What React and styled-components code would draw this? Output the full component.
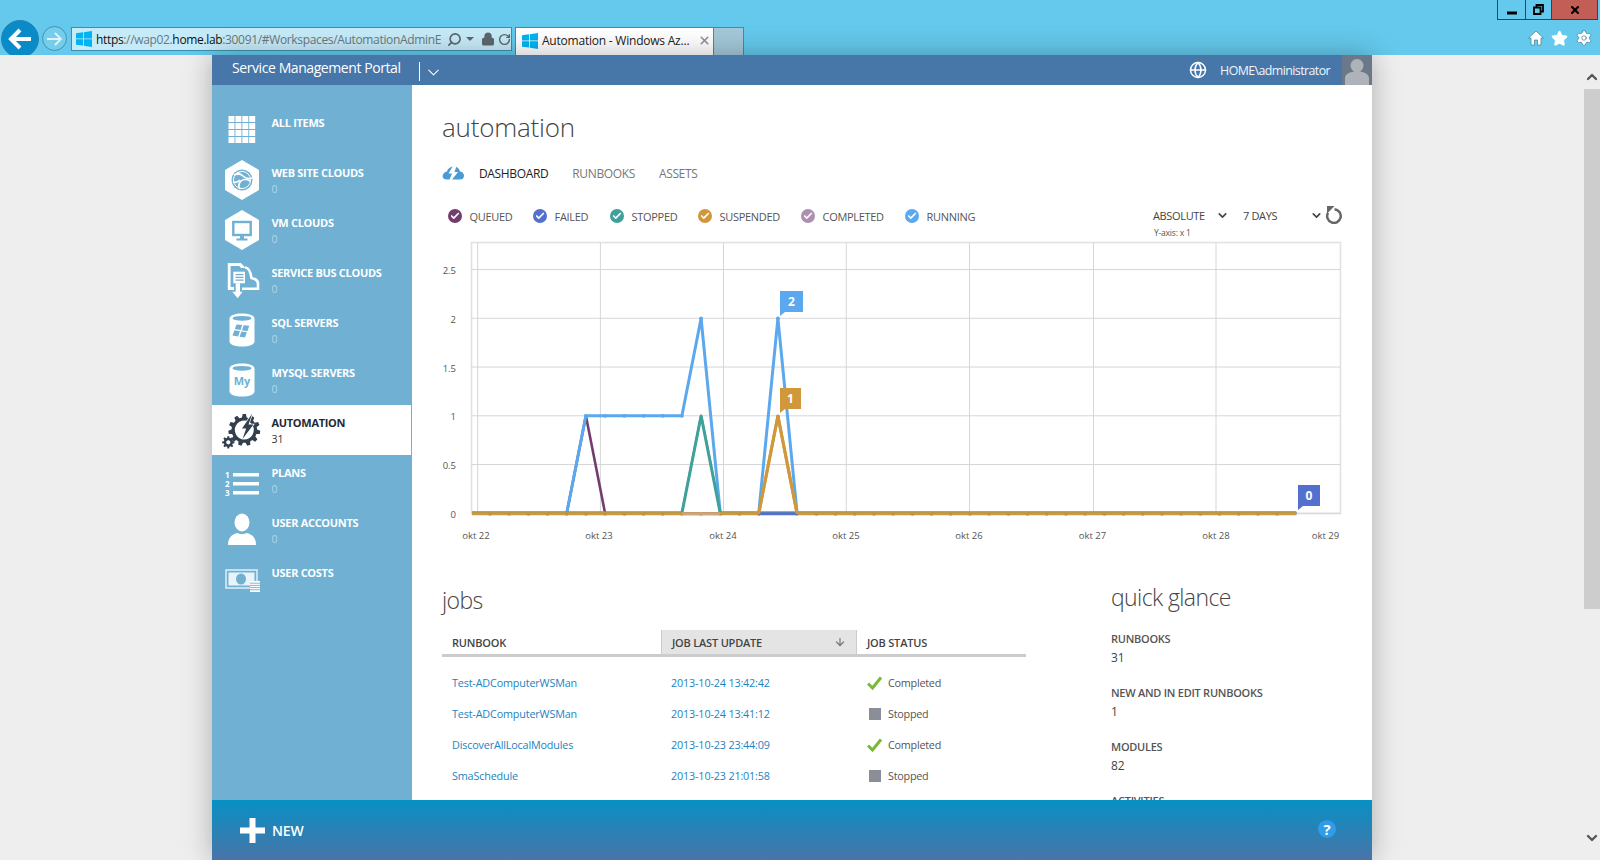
import React from "react";
import styled, { createGlobalStyle } from "styled-components";
import { Globe, Star, Settings, RotateCw, Search, Lock, ArrowDown, X, ChevronDown, ChevronUp, Check } from "lucide-react";

const Global = createGlobalStyle`
  html, body { margin: 0; padding: 0; height: 860px; overflow: hidden; background: #eeeeee; }
  body { font-family: "Open Sans", "Noto Sans", sans-serif; }
  #root { height: 860px; }
  * { box-sizing: border-box; }
`;

const Shell = styled.div`
  width: 1600px; height: 860px; display: flex; flex-direction: column; overflow: hidden;
`;
const Chrome = styled.header`
  height: 55px; background: #64c9ec; display: flex; justify-content: space-between; flex: none; overflow: hidden;
`;
const NavGroup = styled.div`
  display: flex; align-items: flex-start; padding: 20px 0 0 1px;
`;
const BackButton = styled.div`
  width: 38px; height: 38px; border-radius: 50%; background: #0a8bc9; border: 1px solid #2a83ad;
  display: flex; align-items: center; justify-content: center; flex: none;
`;
const ForwardButton = styled.div`
  width: 25px; height: 25px; margin: 6px 4px 0 3px; border-radius: 50%; border: 1px solid #3f94b4; background: #76cdeb;
  display: flex; align-items: center; justify-content: center; flex: none;
`;
const AddressBar = styled.div`
  width: 441px; height: 24px; margin-top: 7px; border: 1px solid #3c8eae; background: #c6ebf8;
  display: flex; align-items: center; padding: 0 0 0 4px; flex: none;
`;
const Url = styled.div`
  width: 346px; flex: none; margin: 2px 0 0 4px; font-size: 12px; letter-spacing: -0.34px; white-space: nowrap; overflow: hidden; color: #6a7880; line-height: 20px;
  b { font-weight: 400; color: #111; }
`;
const AddressTools = styled.div`
  display: flex; align-items: center; margin-left: 5px; color: #5c666c; flex: none;
  gap: 3px;
`;
const TinyCaret = styled.span`
  width: 0; height: 0; border-left: 4px solid transparent; border-right: 4px solid transparent; border-top: 4px solid #5c666c; margin: 0 4px 0 1px;
`;
const TabStrip = styled.div`
  display: flex; margin: 7px 0 0 3px; height: 28px;
`;
const ActiveTab = styled.div`
  width: 199px; background: #fff; border: 1px solid #3c8eae; border-bottom: 0; display: flex; align-items: center; padding: 0 2px 2px 6px;
  font-size: 12px; letter-spacing: -0.22px; color: #222; white-space: nowrap;
  span { flex: 1; margin-left: 4px; }
`;
const NewTab = styled.div`
  width: 30px; background: #a3c8d8; border: 1px solid #3c8eae; border-left: 0; border-bottom: 0;
`;
const RightGroup = styled.div`
  display: flex; flex-direction: column; align-items: flex-end; padding-right: 2px;
`;
const WindowButtons = styled.div`
  display: flex; height: 20px; border: 1px solid #1d4b5e; border-top: 0;
`;
const WinButton = styled.div`
  width: ${p => p.$w}px; display: flex; align-items: center; justify-content: center;
  background: ${p => p.$close ? "#c25e55" : "transparent"};
  & + & { border-left: 1px solid #1d4b5e; }
`;
const BrowserTools = styled.div`
  display: flex; align-items: center; gap: 7px; margin-top: 9px; padding-right: 5px;
`;

const Page = styled.div`
  flex: 1; display: flex; min-height: 0; position: relative;
`;
const Gutter = styled.div`
  width: 212px; flex: none;
`;
const Portal = styled.div`
  width: 1160px; flex: none; display: flex; flex-direction: column; background: #fff;
  box-shadow: 0 0 26px rgba(0,0,0,.28);
`;
const PortalHeader = styled.div`
  height: 30px; flex: none; background: #4776a9; color: #fff; display: flex; align-items: center;
`;
const PortalName = styled.div`
  margin: -5px 0 0 20px; width: 187px; font-size: 14px; letter-spacing: -0.42px; white-space: nowrap;
`;
const HeaderDivider = styled.div`
  width: 1px; height: 19px; background: #fff; margin-top: 2px;
`;
const UserArea = styled.div`
  margin-left: auto; display: flex; align-items: center; height: 100%;
`;
const UserName = styled.div`
  font-size: 12.4px; letter-spacing: -0.58px; margin: 0 12px 0 13px; color: #f2f6fa; white-space: nowrap;
`;
const Avatar = styled.div`
  width: 30px; height: 30px; background: #6b7889; display: flex; align-items: flex-end; justify-content: center; overflow: hidden;
`;
const PortalBody = styled.div`
  flex: 1; display: flex; min-height: 0;
`;
const Sidebar = styled.nav`
  width: 200px; flex: none; background: #6fb0d3; padding-top: 20px;
`;
const Item = styled.div`
  height: 50px; display: flex; background: ${p => p.$active ? "#fff" : "transparent"};
  margin-right: ${p => p.$active ? 1 : 0}px;
`;
const ItemIcon = styled.div`
  width: 60px; flex: none; display: flex; align-items: center; justify-content: center;
`;
const ItemText = styled.div`
  padding-top: 9px; margin-left: -0.5px;
`;
const ItemLabel = styled.div`
  font-size: 11px; font-weight: 700; line-height: 18px; letter-spacing: -0.3px; white-space: nowrap;
  color: ${p => p.$active ? "#222b36" : "#fff"};
`;
const ItemCount = styled.div`
  font-size: 10.5px; line-height: 15px; color: ${p => p.$active ? "#333" : "#b2d6ea"};
`;
const Main = styled.main`
  flex: 1; min-width: 0; padding: 24px 0 0 30px; overflow: hidden;
`;
const Title = styled.h1`
  margin: 0; font-size: 26px; font-weight: 300; line-height: 36px; color: #444; letter-spacing: -0.2px;
`;
const Tabs = styled.div`
  display: flex; align-items: center; height: 20px; margin-top: 18px;
`;
const TabItem = styled.div`
  font-size: 12px; letter-spacing: -0.36px; margin-right: 24px; white-space: nowrap; color: ${p => p.$on ? "#222" : "#777"};
`;
const TabIcon = styled.div`
  width: 37px; flex: none; height: 14px; display: flex;
`;
const LegendRow = styled.div`
  display: flex; justify-content: space-between; height: 32px; margin-top: 23px; padding-left: 6px; width: 908px;
`;
const LegendItems = styled.div`
  display: flex; height: 20px;
`;
const LegendItem = styled.div`
  width: ${p => p.$w}px; display: flex; align-items: center; gap: 7.5px; font-size: 11px; letter-spacing: -0.3px; color: #555; white-space: nowrap;
`;
const LegendDot = styled.span`
  width: 14px; height: 14px; border-radius: 50%; background: ${p => p.$c}; display: flex; align-items: center; justify-content: center; flex: none;
`;
const Controls = styled.div`
  width: 197px; display: flex; flex-direction: column;
`;
const ControlRow = styled.div`
  height: 20px; display: flex; align-items: center; font-size: 11px; letter-spacing: -0.35px; color: #444; white-space: nowrap;
`;
const Select = styled.span`
  width: ${p => p.$w}px; display: flex; align-items: center; justify-content: space-between; margin-right: ${p => p.$m || 0}px;
`;
const AxisNote = styled.div`
  font-size: 8.5px; line-height: 11px; color: #555; padding: 2px 0 0 1px; letter-spacing: -0.2px;
`;
const ChartSvg = styled.svg`
  display: block; font-family: "Open Sans", sans-serif;
`;
const Lower = styled.div`
  display: flex; gap: 85px; width: 908px;
`;
const Jobs = styled.section`
  width: 584px; flex: none; padding-top: 34px;
`;
const Heading = styled.h2`
  margin: 0; font-size: 23px; font-weight: 300; line-height: 32px; color: #444; letter-spacing: -0.6px;
`;
const TableHead = styled.div`
  display: grid; grid-template-columns: 219px 196px 169px; height: 27px; margin-top: 14px; border-bottom: 3px solid #ccc;
`;
const HeadCell = styled.div`
  font-size: 11px; font-weight: 600; color: #444; letter-spacing: -0.2px; display: flex; align-items: center; justify-content: space-between; padding: 0 10px;
  background: ${p => p.$sorted ? "#e4e4e4" : "transparent"};
  border-left: ${p => p.$sorted ? "1px solid #ccc" : "0"};
  border-right: ${p => p.$sorted ? "1px solid #ccc" : "0"};
`;
const TableBody = styled.div`
  padding-top: 10px;
`;
const Row = styled.div`
  display: grid; grid-template-columns: 219px 196px 169px; height: 31px; align-items: center; font-size: 10.8px;
`;
const LinkCell = styled.a`
  padding-left: 10px; color: #1d83bf; white-space: nowrap; letter-spacing: -0.16px;
`;
const StatusCell = styled.div`
  padding-left: 10px; display: flex; align-items: center; gap: 6px; color: #555; letter-spacing: -0.24px;
`;
const StatusIcon = styled.span`
  width: 15px; height: 15px; display: flex; align-items: center; justify-content: center; flex: none;
`;
const StopSquare = styled.span`
  width: 12px; height: 12px; background: #8a8e96; display: block; margin-left: 1px;
`;
const Glance = styled.section`
  flex: 1; padding-top: 31px;
`;
const Stats = styled.div`
  padding-top: 17px;
`;
const Stat = styled.div`
  margin-bottom: 17px;
`;
const StatLabel = styled.div`
  font-size: 11px; font-weight: 600; line-height: 18px; color: #555; letter-spacing: -0.26px; white-space: nowrap;
`;
const StatValue = styled.div`
  font-size: 12px; line-height: 18px; color: #444; margin-top: 1px;
`;
const Footer = styled.footer`
  height: 60px; flex: none; background: linear-gradient(#0890c4, #4874a8); color: #fff; display: flex; align-items: center; padding: 0 36px 0 28px;
`;
const NewLabel = styled.div`
  margin-left: 7px; font-size: 14px; font-weight: 600; letter-spacing: -0.1px;
`;
const Help = styled.div`
  margin-left: auto; margin-top: -3px; width: 18px; height: 18px; border-radius: 50%; background: #2f9de8; color: #fff;
  font-size: 15px; font-weight: 700; display: flex; align-items: center; justify-content: center;
`;
const Scroll = styled.div`
  margin-left: auto; width: 16px; flex: none; display: flex; flex-direction: column; align-items: center; background: #eeeeee;
`;
const ScrollCap = styled.div`
  height: ${p => p.$h}px; display: flex; align-items: center; justify-content: center; flex: none; width: 100%;
  padding: ${p => p.$pad || "0"};
`;
const ScrollThumb = styled.div`
  height: 520px; width: 100%; background: #cdcdcd; flex: none;
`;
const ScrollTrack = styled.div`
  flex: 1;
`;

const WinLogo = ({ size = 16, color = "#00b4f1" }) => (
  <svg width={size} height={size} viewBox="0 0 16 16" style={{ flex: "none" }}>
    <path fill={color} d="M0 2.3 7 1.3V7.5H0ZM7.8 1.2 16 0V7.5H7.8ZM0 8.3H7V14.6L0 13.7ZM7.8 8.3H16V16L7.8 14.8Z" />
  </svg>
);

const gearPath = (cx, cy, ro, ri, teeth) => {
  const pts = [];
  const step = (Math.PI * 2) / teeth;
  for (let i = 0; i < teeth; i++) {
    const a = i * step - Math.PI / 2;
    const w = step * 0.24;
    [[a - w * 1.35, ri], [a - w * 0.75, ro], [a + w * 0.75, ro], [a + w * 1.35, ri]].forEach(([t, r]) => {
      pts.push(`${(cx + r * Math.cos(t)).toFixed(2)} ${(cy + r * Math.sin(t)).toFixed(2)}`);
    });
  }
  return "M" + pts.join("L") + "Z";
};

const BG = "#6fb0d3";
const Hex = () => <polygon fill="#fff" points="22,2 39,12 39,32 22,42 5,32 5,12" />;
const Cylinder = () => (
  <path fill="#fff" d="M9.500 10.500C9.500 7.500 15 5.500 22 5.500S34.500 7.500 34.500 10.500V33.500C34.500 36.500 29 38.500 22 38.500S9.500 36.500 9.500 33.500Z" />
);
const CylTop = () => <ellipse cx="22" cy="10.300" rx="9.500" ry="2.400" fill={BG} />;

const icons = {
  all: (
    <svg width="44" height="44" viewBox="0 0 44 44">
      {[0, 1, 2, 3].flatMap(r => [0, 1, 2, 3].map(c => <rect key={`${r}${c}`} x={8.5 + c * 6.9} y={8 + r * 7} width="6" height="6" fill="#fff" />))}
    </svg>
  ),
  web: (
    <svg width="44" height="44" viewBox="0 0 44 44">
      <Hex />
      <circle cx="22" cy="22" r="10.500" fill={BG} />
      <circle cx="22" cy="22" r="8.600" fill="none" stroke="#fff" strokeWidth="1" />
      <path fill="none" stroke="#fff" strokeWidth="1.700" d="M14 17c4-2 7-1 9 1s6 3 9 2M13 24c3 1 5 0 7-2M20 31c-2-3-1-6 1-8s6-2 9 0" />
      <circle cx="18" cy="15.500" r="1.700" fill="#fff" />
    </svg>
  ),
  vm: (
    <svg width="44" height="44" viewBox="0 0 44 44">
      <Hex />
      <rect x="13.300" y="14" width="17.400" height="13" fill="none" stroke={BG} strokeWidth="2.400" />
      <path fill={BG} d="M20 28h4v2.500h3.500V32.500h-11V30.500H20Z" />
    </svg>
  ),
  bus: (
    <svg width="44" height="44" viewBox="0 0 44 44">
      <path fill="none" stroke="#fff" strokeWidth="2.800" d="M21 6.500H9.200V30.500H14" />
      <path fill="#fff" d="M17 5.500h4.500l4 4.500h-4.500Z" />
      <path fill="#fff" d="M13.300 13.700H25V25.300H13.300Z" />
      <path fill={BG} d="M15.500 16h8v1.200h-8ZM15.500 18.800h8V20h-8ZM15.500 21.600h8v1.200h-8Z" />
      <path fill="#fff" d="M15.700 25.300H20V33.700H22.500L17.700 40.300 12.300 33.700H15.700Z" />
      <path fill="none" stroke="#fff" strokeWidth="2.600" d="M25 9.500c3.500 0 5.500 4 6.500 10.500 4.500 1 6.500 3 6.500 5.500V30.700H22" />
    </svg>
  ),
  sql: (
    <svg width="44" height="44" viewBox="0 0 44 44">
      <Cylinder />
      <CylTop />
      <g fill={BG} transform="rotate(10 22 23) skewX(-10)">
        <path d="M19.500 17.500 25.200 17v5.200H19.500ZM26.700 17l5.500-.4v5.600h-5.500ZM19.500 23.500h5.700V29h-5.700ZM26.700 23.500h5.500V29h-5.500Z" transform="translate(-1 0)" />
      </g>
    </svg>
  ),
  mysql: (
    <svg width="44" height="44" viewBox="0 0 44 44">
      <Cylinder />
      <CylTop />
      <text x="22" y="27" textAnchor="middle" fontFamily="Open Sans, sans-serif" fontWeight="700" fontSize="11" fill={BG}>My</text>
    </svg>
  ),
  automation: (
    <svg width="44" height="44" viewBox="0 0 44 44">
      <path fillRule="evenodd" fill="#333f4d" d={gearPath(24.300, 22, 16, 12.800, 11) + "M24.300 12.500a9.500 9.500 0 1 0 .01 0Z"} />
      <path fill="#333f4d" stroke="#fff" strokeWidth="1.400" paintOrder="stroke" d="M32.300 5.500 22 20.500h4.200L22.500 31 33.500 16.500h-5L32.300 5.500Z" />
      <path fillRule="evenodd" fill="#333f4d" d={gearPath(8.300, 34.300, 6.200, 4.600, 8) + "M8.300 32.200a2.100 2.100 0 1 0 .01 0Z"} />
    </svg>
  ),
  plans: (
    <svg width="44" height="44" viewBox="0 0 44 44" fill="#fff">
      <text fontFamily="Open Sans, sans-serif" fontWeight="700" fontSize="8" x="5" y="20">1</text>
      <text fontFamily="Open Sans, sans-serif" fontWeight="700" fontSize="8" x="5" y="29">2</text>
      <text fontFamily="Open Sans, sans-serif" fontWeight="700" fontSize="8" x="5" y="38">3</text>
      <rect x="13" y="15" width="26" height="3.500" />
      <rect x="13" y="24" width="26" height="3.500" />
      <rect x="13" y="33" width="26" height="3.500" />
    </svg>
  ),
  user: (
    <svg width="44" height="44" viewBox="0 0 44 44" fill="#fff">
      <ellipse cx="22" cy="14.500" rx="7.500" ry="9" />
      <path d="M8 37c0-7 3-10 9-12 3 1.500 7 1.500 10 0 6 2 9 5 9 12Z" />
    </svg>
  ),
  costs: (
    <svg width="44" height="44" viewBox="0 0 44 44">
      <rect x="6" y="12" width="31" height="18" fill="none" stroke="#fff" strokeWidth="1.400" opacity=".85" />
      <rect x="8.500" y="14.500" width="26" height="13" fill="#fff" opacity=".85" />
      <ellipse cx="21" cy="21" rx="5" ry="5.500" fill={BG} />
      <rect x="30" y="23" width="10" height="11" fill="#fff" />
      <path stroke={BG} strokeWidth=".9" d="M30 25.200h10M30 27.400h10M30 29.600h10M30 31.800h10" />
    </svg>
  ),
};

const navItems = [
  ["all", "ALL ITEMS", ""],
  ["web", "WEB SITE CLOUDS", "0"],
  ["vm", "VM CLOUDS", "0"],
  ["bus", "SERVICE BUS CLOUDS", "0"],
  ["sql", "SQL SERVERS", "0"],
  ["mysql", "MYSQL SERVERS", "0"],
  ["automation", "AUTOMATION", "31", true],
  ["plans", "PLANS", "0"],
  ["user", "USER ACCOUNTS", "0"],
  ["costs", "USER COSTS", ""],
];

const legend = [
  ["QUEUED", "#723d6e", 85],
  ["FAILED", "#5470ce", 77],
  ["STOPPED", "#3fa19a", 88],
  ["SUSPENDED", "#d0983a", 103],
  ["COMPLETED", "#ad8fb0", 104],
  ["RUNNING", "#5ba8ee", 90],
];

const X0 = 470.7, STEP = 19.2, N = 43, Y0 = 513.3, UNIT = 97.5;
const px = i => (i === 0 ? 472 : X0 + i * STEP);
const py = v => Y0 - v * UNIT;
const series = (over) => Array.from({ length: N + 1 }, (_, i) => over[i] ?? 0);
const points = (vals, dy = 0) => vals.map((v, i) => `${px(i).toFixed(1)},${(py(v) + dy).toFixed(1)}`).join(" ");
const running = series({ 6: 1, 7: 1, 8: 1, 9: 1, 10: 1, 11: 1, 12: 2, 16: 2 });
const queued = series({ 6: 1 });
const stopped = series({ 12: 1 });
const suspended = series({ 16: 1 });

const Marks = ({ vals, color, dy = 0 }) => vals.map((v, i) => (i === 0 || i === N || v < 0 ? null : <circle key={i} cx={px(i)} cy={py(v) + dy} r="1.900" fill={color} />));

const Bubble = ({ x, y, w, color, children }) => (
  <g>
    <path fill={color} d={`M${x} ${y}h${w}v21h-${w - 5}l-5 4Z`} />
    <text x={x + w / 2} y={y + 15} textAnchor="middle" fill="#fff" fontSize="12" fontWeight="700">{children}</text>
  </g>
);

const Chart = () => {
  const vx = [477.7, 600.4, 723.5, 846.3, 969.5, 1093.5, 1216];
  const xl = [[476, "okt 22"], [599, "okt 23"], [723, "okt 24"], [846, "okt 25"], [969, "okt 26"], [1092.5, "okt 27"], [1216, "okt 28"], [1325.5, "okt 29"]];
  const yl = [[2.5, "2.5"], [2, "2"], [1.5, "1.5"], [1, "1"], [0.5, "0.5"], [0, "0"]];
  return (
    <ChartSvg width="908" height="312" viewBox="442 238 908 312">
      <rect x="471.500" y="242.500" width="869" height="271" fill="none" stroke="#e2e2e2" strokeWidth="1.600" />
      {vx.map(x => <line key={x} x1={x} x2={x} y1="243" y2="513" stroke="#d6d6d6" />)}
      {yl.map(([v]) => <line key={v} x1="471" x2="1340" y1={py(v)} y2={py(v)} stroke="#d6d6d6" />)}
      {yl.map(([v, t]) => <text key={t} x="456" y={py(v) + 4.6} textAnchor="end" fontSize="9.500" fill="#555">{t}</text>)}
      {xl.map(([x, t]) => <text key={t} x={x} y="539" textAnchor="middle" fontSize="9.500" fill="#555">{t}</text>)}
      <g fill="none" strokeLinejoin="miter">
        <polyline points={points(queued)} stroke="#723d6e" strokeWidth="2.600" />
        <polyline points={points(running)} stroke="#5ba8ee" strokeWidth="3" />
        <Marks vals={running.map(v => (v ? v : -10))} color="#5ba8ee" />
        <polyline points={points(stopped, -1)} stroke="#6f9a92" strokeWidth="2" />
        <polyline points={`${px(11)},${Y0} ${px(12)},${py(1)} ${px(13)},${Y0}`} stroke="#3fa19a" strokeWidth="3" />
        <polyline points={points(suspended, .5)} stroke="#d0983a" strokeWidth="3" />
        <Marks vals={suspended} color="#c99135" dy={.5} />
        <polyline points={`${px(11)},${Y0 + .5} ${px(13)},${Y0 + .5}`} stroke="#cba67a" strokeWidth="3" />
        <polyline points={`${px(15)},${Y0 + .5} ${px(17)},${Y0 + .5}`} stroke="#5470ce" strokeWidth="3" />
        <polyline points={`${px(15)},${Y0 + .5} ${px(16)},${py(1)} ${px(17)},${Y0 + .5}`} stroke="#d0983a" strokeWidth="3" />
      </g>
      <Bubble x={780} y={291} w={23} color="#5ba8ee">2</Bubble>
      <Bubble x={780} y={388} w={21} color="#d0983a">1</Bubble>
      <Bubble x={1298} y={485} w={22} color="#5470ce">0</Bubble>
    </ChartSvg>
  );
};

const rows = [
  ["Test-ADComputerWSMan", "2013-10-24 13:42:42", "Completed"],
  ["Test-ADComputerWSMan", "2013-10-24 13:41:12", "Stopped"],
  ["DiscoverAllLocalModules", "2013-10-23 23:44:09", "Completed"],
  ["SmaSchedule", "2013-10-23 21:01:58", "Stopped"],
];
const stats = [["RUNBOOKS", "31"], ["NEW AND IN EDIT RUNBOOKS", "1"], ["MODULES", "82"], ["ACTIVITIES", "1204"]];

export default function App() {
  return (
    <Shell>
      <Global />
      <Chrome>
        <NavGroup>
          <BackButton>
            <svg width="24" height="22" viewBox="0 0 24 22"><path fill="none" stroke="#fff" strokeWidth="4" d="M23 11H4M12 2 3 11l9 9" /></svg>
          </BackButton>
          <ForwardButton>
            <svg width="16" height="14" viewBox="0 0 16 14"><path fill="none" stroke="#dff3fa" strokeWidth="1.800" d="M0 7h13M8 1l6 6-6 6" /></svg>
          </ForwardButton>
          <AddressBar>
            <WinLogo />
            <Url><b>https</b>://wap02.<b>home.lab</b>:30091/#Workspaces/AutomationAdminE</Url>
            <AddressTools>
              <Search size={15} strokeWidth={2.6} style={{ transform: "scaleX(-1)" }} />
              <TinyCaret />
              <Lock size={14} strokeWidth={2.6} fill="#5c666c" />
              <RotateCw size={13} strokeWidth={2.6} />
            </AddressTools>
          </AddressBar>
          <TabStrip>
            <ActiveTab>
              <WinLogo />
              <span>Automation - Windows Az...</span>
              <X size={13} strokeWidth={3} color="#8a9298" />
            </ActiveTab>
            <NewTab />
          </TabStrip>
        </NavGroup>
        <RightGroup>
          <WindowButtons>
            <WinButton $w={27}><svg width="10" height="10" viewBox="0 0 10 10"><rect y="6.500" width="10" height="3" fill="#000" /></svg></WinButton>
            <WinButton $w={26}><svg width="11" height="11" viewBox="0 0 11 11"><path fill="none" stroke="#000" strokeWidth="1.800" d="M1 3.500h6.500V10H1ZM3.500 3V1H10v6.500H8" /></svg></WinButton>
            <WinButton $w={46} $close><X size={12} strokeWidth={4.2} color="#000" /></WinButton>
          </WindowButtons>
          <BrowserTools>
            <svg width="16" height="16" viewBox="0 0 16 16"><path fill="#fff" stroke="#3d7f99" strokeWidth=".7" d="M8 1 15.500 8H13v7H9.500V10h-3v5H3V8H.5Z" /></svg>
            <Star size={17} fill="#fff" color="#fff" />
            <Settings size={18} fill="#fff" color="#3d7f99" strokeWidth={1} />
          </BrowserTools>
        </RightGroup>
      </Chrome>
      <Page>
        <Gutter />
        <Portal>
          <PortalHeader>
            <PortalName>Service Management Portal</PortalName>
            <HeaderDivider />
            <ChevronDown size={19} strokeWidth={1.3} color="#fff" style={{ margin: "5px 0 0 4px" }} />
            <UserArea>
              <Globe size={18} strokeWidth={2} color="#fff" />
              <UserName>HOME\administrator</UserName>
              <Avatar>
                <svg width="24" height="26" viewBox="0 0 24 26"><path fill="#adb3b8" d="M12 0a6.500 6.500 0 0 1 6 9c-1 2-2 3-3 3.600 5 1 8.500 2.400 9 6.400v7H0v-7c.5-4 4-5.400 9-6.400C8 12 7 11 6 9a6.500 6.500 0 0 1 6-9Z" /></svg>
              </Avatar>
            </UserArea>
          </PortalHeader>
          <PortalBody>
            <Sidebar>
              {navItems.map(([k, label, count, active]) => (
                <Item key={k} $active={active}>
                  <ItemIcon>{icons[k]}</ItemIcon>
                  <ItemText>
                    <ItemLabel $active={active}>{label}</ItemLabel>
                    <ItemCount $active={active}>{count}</ItemCount>
                  </ItemText>
                </Item>
              ))}
            </Sidebar>
            <Main>
              <Title>automation</Title>
              <Tabs>
                <TabIcon>
                  <svg width="22" height="14" viewBox="0 0 22 14">
                    <path fill="#4a9ad4" d="M5 13.500C1 13.500 0 10.500 1 8.500 2 6.500 4 5.500 5 5.500 6 2 9 .5 12 .5c3 0 5 1.500 6 5 2 0 4 2 4 4 0 3-2 4-4 4Z" />
                    <path fill="#fff" d="M11.500 -1 6.500 7.500H10L7 15H9L16 6H12.500L15 -1Z" />
                  </svg>
                </TabIcon>
                <TabItem $on>DASHBOARD</TabItem>
                <TabItem>RUNBOOKS</TabItem>
                <TabItem>ASSETS</TabItem>
              </Tabs>
              <LegendRow>
                <LegendItems>
                  {legend.map(([t, c, w]) => (
                    <LegendItem key={t} $w={w}>
                      <LegendDot $c={c}><Check size={10} strokeWidth={4} color="#fff" /></LegendDot>
                      {t}
                    </LegendItem>
                  ))}
                </LegendItems>
                <Controls>
                  <ControlRow>
                    <Select $w={76} $m={14}>ABSOLUTE<ChevronDown size={13} strokeWidth={3} color="#444" /></Select>
                    <Select $w={80}>7 DAYS<ChevronDown size={13} strokeWidth={3} color="#444" /></Select>
                    <svg width="18" height="18" viewBox="0 0 18 18" style={{ marginLeft: 2, marginTop: -1, flex: "none" }}>
                      <path fill="none" stroke="#666" strokeWidth="2.500" d="M9.500 3.300A6.800 6.800 0 1 1 3 6.800" />
                      <path fill="#666" d="M2 0H9.500L2 7.800Z" />
                    </svg>
                  </ControlRow>
                  <AxisNote>Y-axis: x 1</AxisNote>
                </Controls>
              </LegendRow>
              <Chart />
              <Lower>
                <Jobs>
                  <Heading>jobs</Heading>
                  <TableHead>
                    <HeadCell>RUNBOOK</HeadCell>
                    <HeadCell $sorted>JOB LAST UPDATE<ArrowDown size={12} strokeWidth={2.4} color="#777" /></HeadCell>
                    <HeadCell>JOB STATUS</HeadCell>
                  </TableHead>
                  <TableBody>
                    {rows.map(([a, b, s], i) => (
                      <Row key={i}>
                        <LinkCell>{a}</LinkCell>
                        <LinkCell>{b}</LinkCell>
                        <StatusCell>
                          <StatusIcon>
                            {s === "Completed"
                              ? <svg width="15" height="14" viewBox="0 0 15 14"><path fill="none" stroke="#7ab935" strokeWidth="3" d="M1 7.500 5.500 12 14 1.500" /></svg>
                              : <StopSquare />}
                          </StatusIcon>
                          {s}
                        </StatusCell>
                      </Row>
                    ))}
                  </TableBody>
                </Jobs>
                <Glance>
                  <Heading>quick glance</Heading>
                  <Stats>
                    {stats.map(([l, v]) => (
                      <Stat key={l}>
                        <StatLabel>{l}</StatLabel>
                        <StatValue>{v}</StatValue>
                      </Stat>
                    ))}
                  </Stats>
                </Glance>
              </Lower>
            </Main>
          </PortalBody>
          <Footer>
            <svg width="25" height="25" viewBox="0 0 25 25"><path fill="#fff" d="M9.500 0h6v9.500H25v6h-9.500V25h-6V15.500H0v-6h9.500Z" /></svg>
            <NewLabel>NEW</NewLabel>
            <Help>?</Help>
          </Footer>
        </Portal>
        <Scroll>
          <ScrollCap $h={34} $pad="10px 0 0"><ChevronUp size={18} strokeWidth={3.5} color="#555" /></ScrollCap>
          <ScrollThumb />
          <ScrollTrack />
          <ScrollCap $h={40} $pad="0 0 4px"><ChevronDown size={18} strokeWidth={3.5} color="#555" /></ScrollCap>
        </Scroll>
      </Page>
    </Shell>
  );
}
